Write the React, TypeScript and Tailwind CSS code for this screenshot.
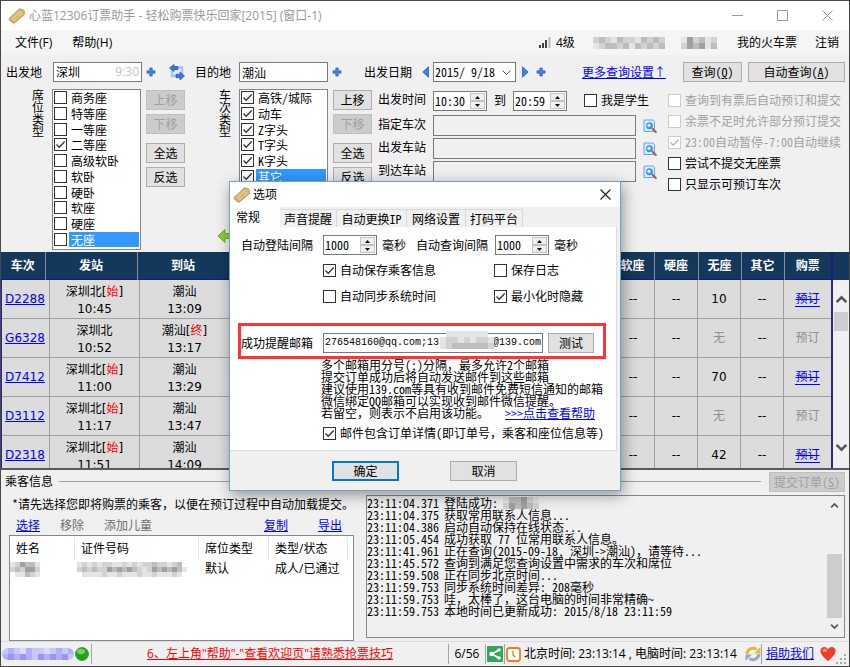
import React from "react";
import clsx from "clsx";

const UI = "font-['Open_Sans','Noto_Sans_CJK_SC',sans-serif]";
const SONG = "font-['Noto_Sans_Mono_CJK_SC','Noto_Sans_CJK_SC',sans-serif]";
const VERDANA = "font-['DejaVu_Sans','Noto_Sans_CJK_SC',sans-serif]";

function TicketIcon() {
  return (
    <svg width="18" height="18" viewBox="0 0 18 18" className="shrink-0">
      <path d="M2 13.500 5 17l3-1 9-9V4l-3-2-9 7z" fill="#8f7440" opacity=".3" />
      <path d="M1 11.500 11.500 1.500l1.500 1 1.500-.5 2 2.500-.5 1.500.5 1.500L6 16l-2-.5-.5-1.500-1.500 0z" fill="#d9b676" stroke="#b8924f" strokeWidth=".8" />
      <path d="M5 11.500 11.500 5l2 2L7 13.500z" fill="none" stroke="#f1dcae" />
      <path d="M7 10.500l2 2M9 8.500l2 2" stroke="#b8924f" strokeWidth=".8" />
    </svg>
  );
}

function PlusIcon() {
  return (
    <svg width="10" height="10" viewBox="0 0 10 10" className="shrink-0">
      <path d="M3.800 1h2.400v2.800H9v2.400H6.200V9H3.800V6.200H1V3.800h2.800z" fill="#4a80da" stroke="#2a5cb8" strokeWidth=".7" strokeLinejoin="round" />
    </svg>
  );
}

function SwapIcon() {
  return (
    <svg width="16" height="16" viewBox="0 0 16 16" className="shrink-0">
      <path d="M4.500 3.500h8.500v8M12 12H3V6" fill="none" stroke="#a9c6f2" strokeWidth="2.500" />
      <path d="M5 8h6" stroke="#d6e5fb" strokeWidth="3" />
      <path d="M.5 4 5 .5v2h4v3H5v2z" fill="#3778dc" stroke="#1d55b5" strokeWidth=".7" />
      <path d="M15.500 12 11 8v2.300H7v3.400h4V16z" fill="#3778dc" stroke="#1d55b5" strokeWidth=".7" />
    </svg>
  );
}

function TriangleIcon({ left }: { left?: boolean }) {
  return (
    <svg width="7" height="12" viewBox="0 0 7 12" className="shrink-0">
      <path d={left ? "M6.500 .8v10.400L.8 6z" : "M.5 .8v10.400L6.200 6z"} fill="#3f82ea" stroke="#2a62c4" strokeWidth=".8" />
    </svg>
  );
}

function SearchIcon() {
  return (
    <svg width="14" height="14" viewBox="0 0 14 14" className="shrink-0">
      <path d="M1 1h9l1.500 1.500V12.500H1z" fill="#d8ecff" stroke="#5fa8ee" />
      <circle cx="6.500" cy="6.800" r="3.500" fill="#3b97ea" />
      <circle cx="6" cy="6.300" r="1.600" fill="#e9f7ff" />
      <path d="m9.800 10 3 3" stroke="#c4572a" strokeWidth="2" strokeLinecap="round" />
    </svg>
  );
}

function Chevron({ up, small }: { up?: boolean; small?: boolean }) {
  const size = small ? 9 : 13;
  return (
    <svg width={size} height={size} viewBox="0 0 12 12" className="shrink-0">
      <path d={up ? "M1.500 8.500 6 4l4.500 4.500" : "M1.500 3.500 6 8l4.500-4.500"} fill="none" stroke="#555" strokeWidth="2.300" />
    </svg>
  );
}

function Mosaic({ rows, cell, tint }: { rows: string[]; cell: number; tint?: "blue" }) {
  const shades: Record<string, string> = tint
    ? { "1": "#dcd9fb", "2": "#c9c6fb", "3": "#b3aefa", "4": "#9a94f6" }
    : { "1": "#e4e4e4", "2": "#d2d2d2", "3": "#bdbdbd", "4": "#a0a0a0" };
  const w = rows[0].length * cell;
  const h = rows.length * cell;
  return (
    <svg width={w} height={h} viewBox={`0 0 ${w} ${h}`} className="shrink-0" aria-hidden="true">
      {rows.map((row, y) =>
        row.split("").map((c, x) =>
          shades[c] ? <rect key={`${x}-${y}`} x={x * cell} y={y * cell} width={cell} height={cell} fill={shades[c]} /> : null
        )
      )}
    </svg>
  );
}

function Btn({
  children,
  className,
  disabled,
  primary,
}: {
  children: React.ReactNode;
  className?: string;
  disabled?: boolean;
  primary?: boolean;
}) {
  return (
    <button
      type="button"
      disabled={disabled}
      className={clsx(
        "flex shrink-0 items-center justify-center whitespace-nowrap",
        disabled && "border border-[#bfbfbf] bg-[#cccccc] text-[#a0a0a0]",
        primary && "border-2 border-[#0078d7] bg-[#e1e1e1]",
        !disabled && !primary && "border border-[#adadad] bg-[#e1e1e1]",
        className ?? "h-5 w-[39px]"
      )}
    >
      {children}
    </button>
  );
}

function Tick({
  label,
  checked,
  disabled,
  selected,
  list,
}: {
  label: string;
  checked?: boolean;
  disabled?: boolean;
  selected?: boolean;
  list?: boolean;
}) {
  return (
    <label className={clsx("flex items-center whitespace-nowrap", list ? "min-h-0 gap-[2px] leading-[15px]" : "gap-1 leading-4", disabled && "text-[#a0a0a0]")}>
      <span className="grid shrink-0">
        <input
          type="checkbox"
          defaultChecked={checked}
          disabled={disabled}
          className={clsx(
            "peer col-start-1 row-start-1 size-[13px] appearance-none border bg-white",
            disabled ? "border-[#cccccc]" : "border-[#333333]"
          )}
        />
        <svg viewBox="0 0 13 13" className="pointer-events-none invisible col-start-1 row-start-1 size-[13px] peer-checked:visible">
          <path d="M2.500 6.500 5.200 9.300 10.700 3.500" fill="none" stroke={disabled ? "#b5b5b5" : "#333"} strokeWidth="1.300" />
        </svg>
      </span>
      <span className={clsx(list && "flex-1 pl-[2px]", selected && "bg-[#3399ff] text-white")}>{label}</span>
    </label>
  );
}

function Spin({ value, label }: { value: string; label: string }) {
  return (
    <div className="flex h-5 w-[54px] shrink-0 border border-[#7a7a7a] bg-white p-px">
      <input aria-label={label} defaultValue={value} className="w-0 min-w-0 flex-1 bg-transparent outline-none" />
      <div className="flex w-[15px] shrink-0 flex-col">
        {["up", "down"].map((d) => (
          <button key={d} type="button" aria-label={`${label} ${d}`} className="flex flex-1 items-center justify-center border border-[#c3c3c3] bg-[#f0f0f0]">
            <svg width="5" height="3" viewBox="0 0 5 3">
              <path d={d === "up" ? "M0 3 2.500 0 5 3z" : "M0 0 2.500 3 5 0z"} fill="#111" />
            </svg>
          </button>
        ))}
      </div>
    </div>
  );
}

function VerticalLabel({ text }: { text: string }) {
  return <div className="w-3 shrink-0 leading-3 break-all">{text}</div>;
}

function CheckList({ items }: { items: { label: string; checked?: boolean; selected?: boolean }[] }) {
  return (
    <div className="grid h-[161px] w-[89px] shrink-0 grid-rows-10 overflow-hidden border border-[#7f8793] bg-white px-px pb-[2px]">
      {items.map((i) => (
        <Tick key={i.label} list {...i} />
      ))}
    </div>
  );
}

function MoveButtons({ upDisabled }: { upDisabled?: boolean }) {
  return (
    <div className="flex shrink-0 flex-col gap-1 pt-px">
      <Btn disabled={upDisabled}>上移</Btn>
      <Btn disabled>下移</Btn>
      <div className="mt-[5px] flex flex-col gap-1">
        <Btn>全选</Btn>
        <Btn>反选</Btn>
      </div>
    </div>
  );
}

const SEATS = [
  { label: "商务座" },
  { label: "特等座" },
  { label: "一等座" },
  { label: "二等座", checked: true },
  { label: "高级软卧" },
  { label: "软卧" },
  { label: "硬卧" },
  { label: "软座" },
  { label: "硬座" },
  { label: "无座", selected: true },
];

const TYPES = [
  { label: "高铁/城际", checked: true },
  { label: "动车", checked: true },
  { label: "Z字头", checked: true },
  { label: "T字头", checked: true },
  { label: "K字头", checked: true },
  { label: "其它", checked: true, selected: true },
];

const TRAINS = [
  { no: "D2288", from: "深圳北", start: true, dep: "10:45", end: false, arr: "13:09", left: "10" },
  { no: "G6328", from: "深圳北", start: false, dep: "10:52", end: true, arr: "13:17", left: "无" },
  { no: "D7412", from: "深圳北", start: true, dep: "11:00", end: false, arr: "13:29", left: "70" },
  { no: "D3112", from: "深圳北", start: true, dep: "11:17", end: false, arr: "13:47", left: "无" },
  { no: "D2318", from: "深圳北", start: true, dep: "11:51", end: false, arr: "14:09", left: "42" },
];

const LOG = [
  ["23:11:04.371", "登陆成功:"],
  ["23:11:04.375", "获取常用联系人信息..."],
  ["23:11:04.386", "启动自动保持在线状态..."],
  ["23:11:05.454", "成功获取 77 位常用联系人信息。"],
  ["23:11:41.961", "正在查询(2015-09-18, 深圳->潮汕)，请等待..."],
  ["23:11:45.572", "查询到满足您查询设置中需求的车次和席位"],
  ["23:11:59.508", "正在同步北京时间..."],
  ["23:11:59.753", "同步系统时间差异: 208毫秒"],
  ["23:11:59.753", "哇，太棒了，这台电脑的时间非常精确~"],
  ["23:11:59.753", "本地时间已更新成功: 2015/8/18 23:11:59"],
];

function TitleBar() {
  return (
    <header className={clsx("flex h-[29px] shrink-0 items-center bg-white pr-4 pl-[7px] text-[#999999]", UI)}>
      <TicketIcon />
      <h1 className="ml-[3px] flex-1 whitespace-nowrap">心蓝12306订票助手 - 轻松购票快乐回家[2015] (窗口-1)</h1>
      <div className="flex items-center gap-[34px]">
        <button type="button" aria-label="最小化">
          <svg width="11" height="11" viewBox="0 0 11 11"><path d="M0 5.500h11" stroke="#999" /></svg>
        </button>
        <button type="button" aria-label="最大化">
          <svg width="11" height="11" viewBox="0 0 11 11"><path d="M.5.500h10v10H.5z" fill="none" stroke="#999" /></svg>
        </button>
        <button type="button" aria-label="关闭">
          <svg width="11" height="11" viewBox="0 0 11 11"><path d="m.5.500 10 10m0-10-10 10" stroke="#999" /></svg>
        </button>
      </div>
    </header>
  );
}

function MenuBar() {
  return (
    <nav className={clsx("flex h-[25px] shrink-0 items-center bg-[#f5f5f5] pr-[10px] pl-[14px] whitespace-nowrap", UI)}>
      <button type="button">文件(F)</button>
      <button type="button" className="ml-5">帮助(H)</button>
      <div className="ml-auto flex items-center">
        <svg width="12" height="11" viewBox="0 0 12 11">
          <path d="M1 11V8M4 11V6M7 11V3" stroke="#444" strokeWidth="2" />
          <path d="M10.500 11V0" stroke="#bbb" strokeWidth="2" />
        </svg>
        <span className="ml-[5px] w-[37px]">4级</span>
        <Mosaic cell={6} rows={["232132213232", "123323132323"]} />
        <span className="ml-4">
          <Mosaic cell={6} rows={["142312", "243413"]} />
        </span>
        <button type="button" className="ml-5">我的火车票</button>
        <button type="button" className="ml-[18px]">注销</button>
      </div>
    </nav>
  );
}

function Filters() {
  const stationRows = ["指定车次", "出发车站", "到达车站"];
  return (
    <section className="shrink-0 pt-[7px] pb-[2px]">
      <div className="flex h-5 items-center pr-1 pl-[5px] whitespace-nowrap">
        <label htmlFor="from">出发地</label>
        <div className="ml-[11px] flex h-5 w-[89px] items-center border border-[#7a7a7a] bg-white px-[2px]">
          <input id="from" defaultValue="深圳" className="w-0 min-w-0 flex-1 outline-none" />
          <span className={clsx("text-[#c4c4c4]", UI)}>9:30</span>
        </div>
        <span className="ml-1 flex w-[23px]"><PlusIcon /></span>
        <SwapIcon />
        <label htmlFor="to" className="ml-[10px]">目的地</label>
        <input id="to" defaultValue="潮汕" className="ml-2 h-5 w-[89px] border border-[#7a7a7a] bg-white px-[2px] outline-none" />
        <span className="ml-1 flex w-8"><PlusIcon /></span>
        <label htmlFor="date" className="mr-[10px]">出发日期</label>
        <TriangleIcon left />
        <div className="ml-1 grid h-5 w-[83px] items-center border border-[#7a7a7a] bg-white">
          <select id="date" className="col-start-1 row-start-1 appearance-none px-px outline-none">
            <option>2015/ 9/18</option>
          </select>
          <svg width="9" height="5" viewBox="0 0 9 5" className="pointer-events-none col-start-1 row-start-1 mr-1 justify-self-end">
            <path d="M.5.500 4.500 4.500 8.500.500" fill="none" stroke="#555" />
          </svg>
        </div>
        <span className="ml-[6px] flex items-center gap-[7px]">
          <TriangleIcon />
          <PlusIcon />
        </span>
        <a href="#more" className="mr-[17px] ml-auto text-[#0000ff] underline">更多查询设置↑</a>
        <Btn className="h-5 w-[59px]"><span>查询(<u>Q</u>)</span></Btn>
        <span className="ml-[6px]"><Btn className="h-5 w-[97px]"><span>自动查询(<u>A</u>)</span></Btn></span>
      </div>

      <div className="mt-[7px] flex h-[161px] pr-2 pl-[31px]">
        <VerticalLabel text="席位类型" />
        <div className="ml-2 flex gap-[5px]">
          <CheckList items={SEATS} />
          <MoveButtons upDisabled />
        </div>
        <div className="ml-[34px] flex flex-col justify-between">
          <VerticalLabel text="车次类型" />
          <svg width="14" height="14" viewBox="0 0 14 14" className="mb-[7px] -ml-px">
            <path d="M0 7 7 .500v4h7v5H7v4z" fill="#8ccf2c" stroke="#5f9d17" strokeWidth=".8" />
          </svg>
        </div>
        <div className="ml-[7px] flex gap-[5px]">
          <CheckList items={TYPES} />
          <MoveButtons />
        </div>
        <div className="ml-[6px] flex flex-col gap-[2px] pt-[2px] whitespace-nowrap">
          <div className="flex h-[22px] items-start">
            <span className="w-[55px]">出发时间</span>
            <Spin value="10:30" label="起始时间" />
            <span className="mx-[7px] pt-px">到</span>
            <Spin value="20:59" label="结束时间" />
            <span className="ml-[17px] pt-px"><Tick label="我是学生" /></span>
          </div>
          {stationRows.map((r) => (
            <div key={r} className="flex h-[21px] items-center">
              <label htmlFor={r} className="w-[55px] pb-[3px]">{r}</label>
              <input id={r} className="h-[21px] w-[203px] border border-[#7a7a7a] bg-[#f0f0f0] px-1 outline-none" />
              <span className="ml-[7px]"><SearchIcon /></span>
            </div>
          ))}
        </div>
        <div className="ml-auto flex flex-col gap-[5px] pt-[3px]">
          <Tick label="查询到有票后自动预订和提交" disabled />
          <Tick label="余票不足时允许部分预订提交" disabled />
          <Tick label="23:00自动暂停-7:00自动继续" disabled checked />
          <Tick label="尝试不提交无座票" />
          <Tick label="只显示可预订车次" />
        </div>
      </div>
    </section>
  );
}

function TrainTable() {
  const th = "border-r border-[#8d8d8d] p-0 text-center font-bold";
  const td = "border-r border-b border-[#a0a0a0] p-0 text-center";
  return (
    <section className={clsx("flex min-h-0 flex-1 flex-col border-b-2 border-[#5a5a5a]", VERDANA)}>
      <div className="flex shrink-0 bg-[#14385c] pr-4">
        <table className="h-7 w-full table-fixed border-collapse border-b border-[#1a1a6e] text-white">
          <thead>
            <tr>
              <th className={clsx(th, "w-[44px]")}>车次</th>
              <th className={clsx(th, "w-[92px]")}>发站</th>
              <th className={clsx(th, "w-[92px]")}>到站</th>
              <td className="border-r border-[#8d8d8d]" />
              <th className={clsx(th, "w-[43px]")}>软座</th>
              <th className={clsx(th, "w-[44px]")}>硬座</th>
              <th className={clsx(th, "w-[43px]")}>无座</th>
              <th className={clsx(th, "w-[43px]")}>其它</th>
              <th className="w-[48px] border-r-2 border-[#1a1a80] p-0 text-center font-bold">购票</th>
            </tr>
          </thead>
        </table>
      </div>
      <div className="flex min-h-0 flex-1">
        <div className="min-w-0 flex-1 overflow-hidden border-r-2 border-l border-[#2a2a88] bg-[#dcdcdc]">
          <table className="w-full table-fixed border-separate border-spacing-0">
            <tbody>
              {TRAINS.map((t) => (
                <tr key={t.no} className="h-[39px]">
                  <td className={clsx(td, "w-[48px]")}>
                    <a href={`#${t.no}`} className="mr-px text-[#0000ff] underline">{t.no}</a>
                  </td>
                  <td className={clsx(td, "w-[90px] pt-[3px] leading-[17px]")}>
                    <div>{t.from}{t.start && <>[<span className="text-[#ff0000]">始</span>]</>}</div>
                    <div>{t.dep}</div>
                  </td>
                  <td className={clsx(td, "w-[90px] pt-[3px] leading-[17px]")}>
                    <div>潮汕{t.end && <>[<span className="text-[#ff0000]">终</span>]</>}</div>
                    <div>{t.arr}</div>
                  </td>
                  <td className={td} />
                  <td className={clsx(td, "w-[43px]")}>--</td>
                  <td className={clsx(td, "w-[43px]")}>--</td>
                  <td className={clsx(td, "w-[43px]", t.left === "无" && "text-[#909090]")}>{t.left}</td>
                  <td className={clsx(td, "w-[43px]")}>--</td>
                  <td className="w-[47px] border-b border-[#a0a0a0] p-0 text-center">
                    {t.left === "无" ? (
                      <span className="text-[#909090]">预订</span>
                    ) : (
                      <a href={`#book-${t.no}`} className="border-b border-[#0000ff] text-[#0000ff] line-through">预订</a>
                    )}
                  </td>
                </tr>
              ))}
            </tbody>
          </table>
        </div>
        <div className="flex w-4 shrink-0 flex-col items-center bg-[#f0f0f0] pt-[13px] pb-[14px]">
          <Chevron up />
          <div className="mt-[6px] h-[19px] w-[14px] bg-[#cdcdcd]" />
          <div className="mt-auto"><Chevron /></div>
        </div>
      </div>
    </section>
  );
}

function Passengers() {
  const th = "border-r border-[#e5e5e5] p-0 pl-[6px] text-left font-normal";
  return (
    <section className="shrink-0 pt-[2px]">
      <div className="flex h-5 items-center pr-1 pl-1">
        <h2 className="mr-[6px] pb-[2px]">乘客信息</h2>
        <hr className="mr-2 mb-[2px] flex-1 border-[#a0a0a0]" />
        <Btn disabled className="h-5 w-[76px]"><span>提交订单(<u>S</u>)</span></Btn>
      </div>
      <div className="mt-[3px] flex h-[146px] gap-3 pr-1 pl-2">
        <div className="flex w-[345px] shrink-0 flex-col">
          <p className="pl-[3px] leading-[18px] whitespace-nowrap">*请先选择您即将购票的乘客，以便在预订过程中自动加载提交。</p>
          <div className="flex h-[22px] items-center gap-5 pr-3 pl-[7px] pt-[2px] text-[#6d6d6d]">
            <a href="#pick" className="text-[#0000ff] underline">选择</a>
            <span>移除</span>
            <span>添加儿童</span>
            <a href="#copy" className="mr-[10px] ml-auto text-[#0000ff] underline">复制</a>
            <a href="#export" className="text-[#0000ff] underline">导出</a>
          </div>
          <div className={clsx("min-h-0 flex-1 border border-[#828790] bg-white pt-px pr-[5px]", UI)}>
            <table className="w-full table-fixed border-separate border-spacing-0">
              <thead>
                <tr className="h-[23px]">
                  <th className={clsx(th, "w-[65px]")}>姓名</th>
                  <th className={clsx(th, "w-[124px]")}>证件号码</th>
                  <th className={clsx(th, "w-[70px]")}>席位类型</th>
                  <th className={th}>类型/状态</th>
                </tr>
              </thead>
              <tbody>
                <tr className="h-[18px]">
                  <td className="p-0"><Mosaic cell={5} rows={["124331", "232442", "011321"]} /></td>
                  <td className="p-0 pl-[2px]"><Mosaic cell={5} rows={["1212122112121223221230", "2323224343432124343431", "0111121121112112111210"]} /></td>
                  <td className="p-0 pl-[6px]">默认</td>
                  <td className="p-0 pl-[6px] whitespace-nowrap">成人/已通过</td>
                </tr>
              </tbody>
            </table>
          </div>
        </div>
        <div className="mb-[3px] flex min-w-0 flex-1 border border-[#828790] pt-px pr-[2px]">
          <ul className="min-w-0 flex-1 overflow-hidden leading-3 whitespace-nowrap">
            {LOG.map(([time, text], i) => (
              <li key={text} className="flex h-3 gap-[5px]">
                <span>{time}</span>
                <span>{text}</span>
                {i === 0 && <Mosaic cell={6} rows={["133421", "243432"]} />}
              </li>
            ))}
          </ul>
          <div className="flex w-[15px] shrink-0 flex-col items-center pt-1 pb-[6px]">
            <Chevron up small />
            <div className="mt-auto mb-1 h-[64px] w-full bg-[#cdcdcd]" />
            <Chevron small />
          </div>
        </div>
      </div>
    </section>
  );
}

function StatusBar() {
  const sep = <span className="h-5 w-px shrink-0 bg-[#a5a5a5]" />;
  return (
    <footer className={clsx("flex h-[25px] shrink-0 items-center border-t border-[#dcdcdc] whitespace-nowrap", UI)}>
      <span className="ml-px flex w-[72px] overflow-hidden rounded-full">
        <Mosaic cell={6} tint="blue" rows={["232132212323", "343432434342"]} />
      </span>
      <svg width="14" height="14" viewBox="0 0 14 14" className="ml-px">
        <circle cx="7" cy="7" r="6.500" fill="#1fa516" stroke="#15850f" strokeWidth=".6" />
        <ellipse cx="6" cy="4.500" rx="4" ry="2.800" fill="#8be06f" opacity=".8" />
      </svg>
      <span className="ml-[2px] flex">{sep}</span>
      <a href="#tips" className="mx-auto text-[#ff0000] underline">6、左上角"帮助"-"查看欢迎页"请熟悉抢票技巧</a>
      {sep}
      <span className="w-9 text-center">6/56</span>
      {sep}
      <svg width="16" height="16" viewBox="0 0 16 16" className="mx-px">
        <rect width="16" height="16" rx="1" fill="#33a45c" />
        <path d="M12 4 5 8l7 4" fill="none" stroke="#fff" strokeWidth="1.800" />
        <circle cx="12" cy="4" r="1.800" fill="#fff" /><circle cx="4.500" cy="8" r="2.200" fill="#fff" /><circle cx="12" cy="12" r="1.800" fill="#fff" />
      </svg>
      {sep}
      <svg width="15" height="15" viewBox="0 0 15 15" className="mx-px">
        <rect x="1" y="1" width="13" height="13" rx="2.500" fill="#fff" stroke="#f07a1c" strokeWidth="1.800" />
        <path d="M7 3.500v4.500l2.500 2" fill="none" stroke="#f07a1c" strokeWidth="1.300" />
      </svg>
      <span className="ml-[2px] w-[221px]">北京时间: 23:13:14 , 电脑时间: 23:13:14</span>
      <svg width="16" height="16" viewBox="0 0 16 16">
        <path d="M2 8a6 6 0 0 1 9.500-4.500" fill="none" stroke="#e8b63c" strokeWidth="3" />
        <path d="M15.500 1v6.500H9z" fill="#e8b63c" />
        <path d="M14 8a6 6 0 0 1-9.500 4.500" fill="none" stroke="#94a9c6" strokeWidth="3" />
        <path d="M.5 15V8.500H7z" fill="#94a9c6" />
      </svg>
      {sep}
      <a href="#donate" className="ml-1 text-[#0000ff] underline">捐助我们</a>
      <svg width="16" height="16" viewBox="0 0 16 16" className="ml-[6px]">
        <path d="M8 15C3 10.500.5 8 .5 5 .5 2.500 2.200 1 4.300 1 6 1 7.300 2 8 3.300 8.700 2 10 1 11.700 1c2.100 0 3.800 1.500 3.800 4 0 3-2.500 5.500-7.500 10z" fill="#f03a2c" />
        <ellipse cx="4.800" cy="4.300" rx="2.300" ry="1.700" fill="#ff8a78" />
      </svg>
      <svg width="10" height="10" viewBox="0 0 10 10" className="mr-[3px] mb-[2px] self-end">
        <path d="M8 0h2v2H8zM4 4h2v2H4zM8 4h2v2H8zM0 8h2v2H0zM4 8h2v2H4zM8 8h2v2H8z" fill="#a8a8a8" />
      </svg>
    </footer>
  );
}

const TABS = [
  ["声音提醒", "w-[57px]"],
  ["自动更换IP", "w-[70px]"],
  ["网络设置", "w-[59px]"],
  ["打码平台", "w-[57px]"],
];

function OptionsDialog() {
  return (
    <div
      role="dialog"
      aria-label="选项"
      className="absolute top-[180px] left-[228px] w-[392px] border border-[#6da3c6] bg-[#f0f0f0] shadow-[2px_4px_14px_rgba(0,0,0,0.4)]"
    >
      <div className={clsx("flex h-[25px] items-center bg-white pr-[9px] pl-[3px]", UI)}>
        <TicketIcon />
        <h2 className="ml-[2px] flex-1">选项</h2>
        <button type="button" aria-label="关闭">
          <svg width="11" height="11" viewBox="0 0 11 11"><path d="m.5.500 10 10m0-10-10 10" stroke="#222" strokeWidth="1.200" /></svg>
        </button>
      </div>
      <div role="tablist" className="flex h-5 items-end">
        <button role="tab" aria-selected="true" type="button" className="h-5 w-[50px] bg-white pr-[14px]">常规</button>
        {TABS.map(([t, w]) => (
          <button key={t} role="tab" type="button" className={clsx("h-[18px] border-t border-r border-[#d9d9d9] leading-[15px] whitespace-nowrap", w)}>
            {t}
          </button>
        ))}
      </div>
      <div className="mr-[3px] border-r border-b border-[#dcdcdc] bg-white pt-[8px] pb-[9px] pl-[8px] whitespace-nowrap">
        <div className="flex h-5 items-center pl-[3px]">
          <span className="w-[82px]">自动登陆间隔</span>
          <Spin value="1000" label="自动登陆间隔" />
          <span className="ml-[5px] w-[34px]">毫秒</span>
          <span className="w-[79px]">自动查询间隔</span>
          <Spin value="1000" label="自动查询间隔" />
          <span className="ml-[5px]">毫秒</span>
        </div>
        <div className="mt-[7px] grid grid-cols-[171px_1fr] gap-y-[10px] pl-[85px]">
          <Tick label="自动保存乘客信息" checked />
          <Tick label="保存日志" />
          <Tick label="自动同步系统时间" />
          <Tick label="最小化时隐藏" checked />
        </div>
        <div className="mt-[19px] flex h-9 w-[368px] items-center border-[3px] border-[#ff3333] pt-[3px]">
          <label htmlFor="mail" className="w-[82px]">成功提醒邮箱</label>
          <div className="relative">
            <input
              id="mail"
              defaultValue="276548160@qq.com;13         @139.com"
              className="h-5 w-[220px] border border-[#7a7a7a] bg-white px-px font-['Liberation_Mono',monospace] text-[10px] outline-none"
            />
            <span className="absolute -top-px left-[117px]">
              <Mosaic cell={6} rows={["011111110", "122121221", "123333332"]} />
            </span>
          </div>
          <span className="ml-[5px]"><Btn className="h-5 w-[46px]">测试</Btn></span>
        </div>
        <div className="pl-[83px] leading-3">
          <p>多个邮箱用分号(;)分隔，最多允许2个邮箱</p>
          <p>提交订单成功后将自动发送邮件到这些邮箱</p>
          <p>建议使用139.com等具有收到邮件免费短信通知的邮箱</p>
          <p>微信绑定QQ邮箱可以实现收到邮件微信提醒。</p>
          <p>
            若留空，则表示不启用该功能。
            <a href="#help" className="ml-[16px] text-[#0000ff] underline">&gt;&gt;&gt;点击查看帮助</a>
          </p>
        </div>
        <div className="mt-[6px] pl-[85px]">
          <Tick label="邮件包含订单详情(即订单号，乘客和座位信息等)" checked />
        </div>
      </div>
      <div className="flex gap-[51px] pt-[10px] pb-[9px] pl-[102px]">
        <Btn primary className="h-5 w-[67px]">确定</Btn>
        <Btn className="h-5 w-[67px]">取消</Btn>
      </div>
    </div>
  );
}

export default function App() {
  return (
    <main className={clsx("relative flex h-screen min-h-[600px] flex-col overflow-hidden border border-[#4a4749] bg-[#f0f0f0] text-[12px] leading-4 text-black", SONG)}>
      <TitleBar />
      <MenuBar />
      <Filters />
      <TrainTable />
      <Passengers />
      <StatusBar />
      <OptionsDialog />
    </main>
  );
}
